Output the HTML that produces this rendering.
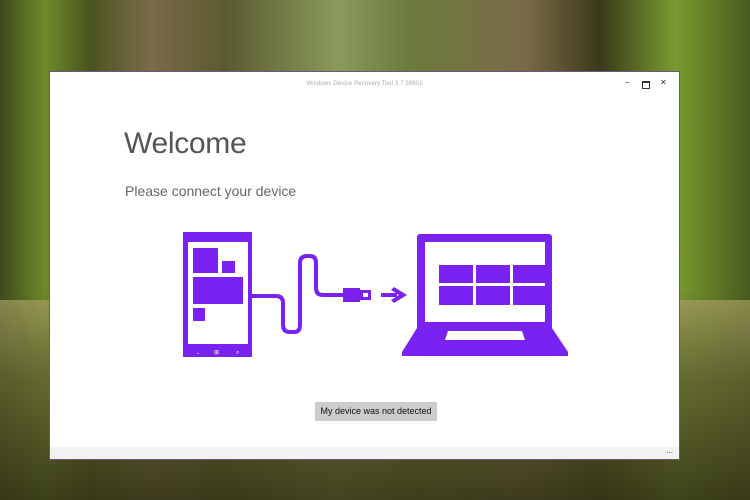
<!DOCTYPE html>
<html><head><meta charset="utf-8"><style>
html,body{margin:0;padding:0}
body{width:750px;height:500px;position:relative;overflow:hidden;font-family:"Liberation Sans",sans-serif;
background:
linear-gradient(180deg,rgba(0,0,0,0) 0%,rgba(0,0,0,0) 58%,rgba(30,35,10,.3) 70%,rgba(20,20,5,.5) 100%),
linear-gradient(90deg,#3e4a1c 0%,#6e8a2a 6%,#4a5520 12%,#7a6a4a 20%,#5a5a30 30%,#8a9a5a 45%,#6b7a3a 55%,#7a6a4a 70%,#3a3a1a 80%,#7a9a30 90%,#4a5a20 100%);}
.bg2{position:absolute;left:0;top:300px;width:750px;height:200px;background:linear-gradient(180deg,#a5a060 0%,#6a6a35 40%,#3a3a1a 100%);opacity:.7}
.win{position:absolute;left:50px;top:72px;width:629px;height:387px;background:#fff;box-shadow:0 0 0 1px #6a5a7a}
.title{position:absolute;left:0;top:9px;width:629px;text-align:center;font-size:6px;color:#aaa;letter-spacing:.1px}
.ctl{position:absolute;top:6px;font-size:8px;color:#333}
h1{position:absolute;left:74px;top:55px;margin:0;font-weight:normal;font-size:30px;color:#555;letter-spacing:-.3px}
.sub{position:absolute;left:75px;top:111px;font-size:14px;color:#666}
.btn{position:absolute;left:265px;top:330px;width:122px;height:19px;background:#ccc;font-size:9px;color:#111;text-align:center;line-height:19px}
.bar{position:absolute;left:0;top:375px;width:629px;height:12px;background:#f2f2f2}
</style></head><body>
<div class="bg2"></div>
<div class="win">
<div class="title">Windows Device Recovery Tool 3.7.38601</div>
<div class="ctl" style="left:575px">&#8211;</div>
<div class="ctl" style="left:592px;width:6px;height:5px;border:1px solid #333;border-top-width:2px;top:9px"></div>
<div class="ctl" style="left:610px">✕</div>
<h1>Welcome</h1>
<div class="sub">Please connect your device</div>
<svg style="position:absolute;left:0;top:0" width="629" height="387" viewBox="50 72 629 387">
<path d="M252 296 H276 Q283 296 283 303 V325 Q283 332 290 332 H294 Q300 332 300 325 V263 Q300 256 307 256 H310 Q316 256 316 263 V288 Q316 295 323 295 H343" fill="none" stroke="#7a22f2" stroke-width="4"/>
<g fill="#7a22f2">
<rect x="183" y="232" width="69" height="125"/>
<rect x="188" y="242" width="60" height="102" fill="#fff"/>
<rect x="193" y="248" width="25" height="25"/>
<rect x="222" y="261" width="13" height="12"/>
<rect x="193" y="277" width="50" height="27"/>
<rect x="193" y="308" width="12" height="13"/>
<polygon points="417,328 552,328 568,352 568,356 402,356 402,352"/>
<rect x="417" y="234" width="135" height="98" rx="3"/>
<rect x="425" y="242" width="120" height="80" fill="#fff"/>
<rect x="439" y="265" width="106" height="40"/>
<polygon points="448,331 522,331 525,340 445,340" fill="#fff"/>
<rect x="343" y="288" width="17" height="14"/>
<rect x="360" y="290" width="11" height="10"/>
<rect x="381" y="293" width="16" height="4"/>
<polygon points="394,287 407,295 394,303 391,300 399,295 391,290"/>
</g>
<g fill="#fff">
<rect x="473" y="265" width="3" height="40"/><rect x="510" y="265" width="3" height="40"/>
<rect x="439" y="283" width="106" height="3"/>
<rect x="363" y="293" width="5" height="4"/>
</g>
<g fill="#fff" font-size="6"><text x="196" y="354">←</text><text x="214" y="354">⊞</text><text x="236" y="354">⌕</text></g>
</svg>
<div class="btn">My device was not detected</div>
<div class="bar"><span style="position:absolute;right:6px;top:0;font-size:8px;color:#555;line-height:8px">...</span></div>
</div>
</body></html>
